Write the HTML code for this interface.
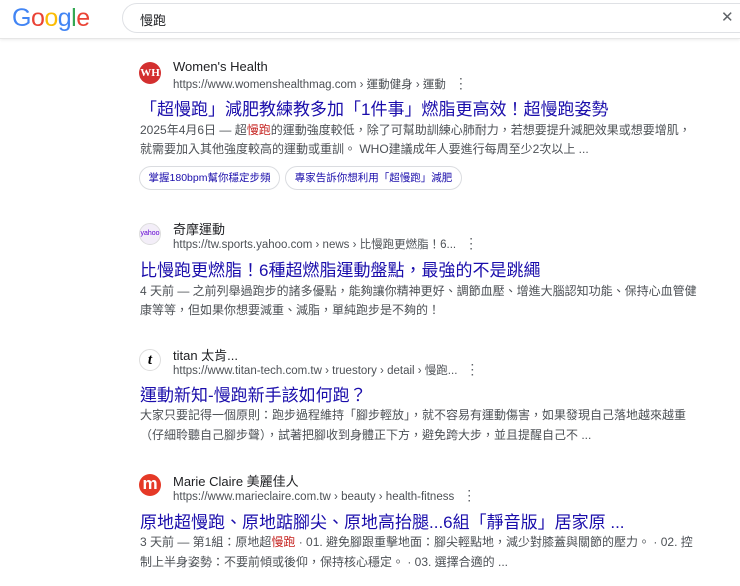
<!DOCTYPE html>
<html><head><meta charset="utf-8"><style>
*{margin:0;padding:0;box-sizing:border-box}
body{width:740px;height:586px;overflow:hidden;background:#fff;font-family:"Liberation Sans","Noto Sans CJK TC",sans-serif;position:relative}
.a{position:absolute;white-space:nowrap}
.hdr{position:absolute;left:0;top:0;width:740px;height:39px;border-bottom:1px solid #e6e6e6;box-shadow:0 1px 3px rgba(0,0,0,.08)}
.logo{left:12px;top:4px;font-size:25px;font-family:"Liberation Sans",sans-serif;letter-spacing:-0.5px}
.box{position:absolute;left:122px;top:3px;width:640px;height:30px;border:1px solid #dfe1e5;border-radius:16px}
.name{font-size:13px;color:#202124}
.url{font-size:11.5px;color:#4d5156}
.url b{font-weight:normal;color:#5f6368;margin-left:8px;font-size:14px}
.t{font-size:17px;color:#1a0dab}
.s{font-size:12px;color:#4d5156}
.em{color:#c5221f}
.fav{position:absolute;width:22px;height:22px;border-radius:50%;text-align:center;overflow:hidden}
.chip{position:absolute;top:166px;height:24px;border:1px solid #dadce0;border-radius:12px;font-size:10.5px;color:#1a0dab;line-height:22px;text-align:center}
</style></head><body>
<div class="hdr"></div>
<div class="a logo"><span style="color:#4285f4">G</span><span style="color:#ea4335">o</span><span style="color:#fbbc05">o</span><span style="color:#4285f4">g</span><span style="color:#34a853">l</span><span style="color:#ea4335">e</span></div>
<div class="box"></div>
<div class="a" style="left:140px;top:10px;font-size:13px;color:#202124">慢跑</div>
<div class="a" style="left:721px;top:8px;font-size:15px;color:#5f6368">✕</div>

<div class="fav" style="left:139px;top:62px;background:#d32f2f;color:#fff;font:bold 11px/22px 'Liberation Serif',serif">WH</div>
<div class="a name" style="left:173px;top:59px">Women's Health</div>
<div class="a url" style="left:173px;top:75px">https://www.womenshealthmag.com › 運動健身 › 運動<b>⋮</b></div>
<div class="a t" style="left:140px;top:95px">「超慢跑」減肥教練教多加「1件事」燃脂更高效！超慢跑姿勢</div>
<div class="a s" style="left:140px;top:121px">2025年4月6日 — 超<span class="em">慢跑</span>的運動強度較低，除了可幫助訓練心肺耐力，若想要提升減肥效果或想要增肌，</div>
<div class="a s" style="left:140px;top:140px">就需要加入其他強度較高的運動或重訓。 WHO建議成年人要進行每周至少2次以上 ...</div>
<div class="chip" style="left:139px;width:141px">掌握180bpm幫你穩定步頻</div>
<div class="chip" style="left:285px;width:177px">專家告訴你想利用「超慢跑」減肥</div>

<div class="fav" style="left:139px;top:223px;background:#f3eef8;border:1px solid #ddd;color:#6001d2;font-size:7px;line-height:20px">yahoo</div>
<div class="a name" style="left:173px;top:219px">奇摩運動</div>
<div class="a url" style="left:173px;top:235px">https://tw.sports.yahoo.com › news › 比慢跑更燃脂！6...<b>⋮</b></div>
<div class="a t" style="left:140px;top:256px">比慢跑更燃脂！6種超燃脂運動盤點，最強的不是跳繩</div>
<div class="a s" style="left:140px;top:282px">4 天前 — 之前列舉過跑步的諸多優點，能夠讓你精神更好、調節血壓、增進大腦認知功能、保持心血管健</div>
<div class="a s" style="left:140px;top:301px">康等等，但如果你想要減重、減脂，單純跑步是不夠的！</div>

<div class="fav" style="left:139px;top:349px;background:#fff;border:1px solid #ddd;color:#000;font:bold italic 15px/20px 'Liberation Serif',serif">t</div>
<div class="a name" style="left:173px;top:345px">titan 太肯...</div>
<div class="a url" style="left:173px;top:361px">https://www.titan-tech.com.tw › truestory › detail › 慢跑...<b>⋮</b></div>
<div class="a t" style="left:140px;top:381px">運動新知-慢跑新手該如何跑？</div>
<div class="a s" style="left:140px;top:406px">大家只要記得一個原則：跑步過程維持「腳步輕放」，就不容易有運動傷害，如果發現自己落地越來越重</div>
<div class="a s" style="left:140px;top:426px">（仔細聆聽自己腳步聲），試著把腳收到身體正下方，避免跨大步，並且提醒自己不 ...</div>

<div class="fav" style="left:139px;top:474px;background:#e53927;color:#fff;font:bold 17px/19px 'Liberation Sans',sans-serif">m</div>
<div class="a name" style="left:173px;top:471px">Marie Claire 美麗佳人</div>
<div class="a url" style="left:173px;top:487px">https://www.marieclaire.com.tw › beauty › health-fitness<b>⋮</b></div>
<div class="a t" style="left:140px;top:508px">原地超慢跑、原地踮腳尖、原地高抬腿...6組「靜音版」居家原 ...</div>
<div class="a s" style="left:140px;top:533px">3 天前 — 第1組：原地超<span class="em">慢跑</span> · 01. 避免腳跟重擊地面：腳尖輕點地，減少對膝蓋與關節的壓力。 · 02. 控</div>
<div class="a s" style="left:140px;top:553px">制上半身姿勢：不要前傾或後仰，保持核心穩定。 · 03. 選擇合適的 ...</div>
</body></html>
